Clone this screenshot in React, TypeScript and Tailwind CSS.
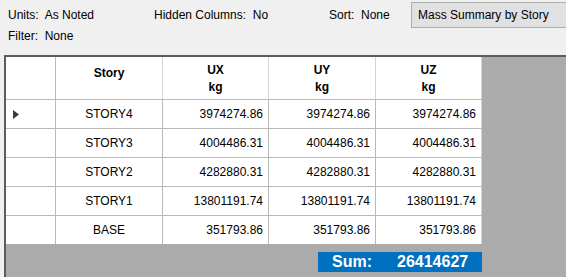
import React from 'react';

interface Row {
  story: string;
  ux: string;
  uy: string;
  uz: string;
}

const rows: Row[] = [
  { story: 'STORY4', ux: '3974274.86', uy: '3974274.86', uz: '3974274.86' },
  { story: 'STORY3', ux: '4004486.31', uy: '4004486.31', uz: '4004486.31' },
  { story: 'STORY2', ux: '4282880.31', uy: '4282880.31', uz: '4282880.31' },
  { story: 'STORY1', ux: '13801191.74', uy: '13801191.74', uz: '13801191.74' },
  { story: 'BASE', ux: '351793.86', uy: '351793.86', uz: '351793.86' },
];

export default function App() {
  return (
    <div className="w-[566px] h-[277px] overflow-hidden bg-[#f0f0f0] flex flex-col text-[12px] text-black font-['Liberation_Sans',Arial,sans-serif]">
      {/* Info bar */}
      <div className="h-[55px] flex flex-col">
        <div className="flex items-center h-[28px] pt-[1px]">
          <span className="ml-[8px] w-[146px] whitespace-pre">Units:  As Noted</span>
          <span className="w-[175px] whitespace-pre">Hidden Columns:  No</span>
          <span className="w-[82px] whitespace-pre">Sort:  None</span>
          <div className="h-[26px] flex-1 flex items-center pl-[6px] bg-[#e1e1e1] border border-r-0 border-[#adadad] whitespace-nowrap">
            Mass Summary by Story
          </div>
        </div>
        <div className="ml-[8px] -mt-[1px] whitespace-pre">Filter:  None</div>
      </div>

      {/* Grid */}
      <div className="flex-1 ml-[4px] border-t-2 border-l-2 border-[#5c5c5c] bg-[#ababab] flex flex-col">
        <div className="flex flex-col w-[476px] bg-white">
          <div className="flex h-[43px] border-b border-[#b9b9b9] font-bold">
            <div className="w-[50px] border-r border-[#b9b9b9]" />
            <div className="w-[107px] border-r border-[#d4d4d4] text-center pt-[7px]">Story</div>
            <div className="w-[106px] border-r border-[#d4d4d4] text-center pt-[5px] leading-[17px]">UX<br />kg</div>
            <div className="w-[107px] border-r border-[#d4d4d4] text-center pt-[5px] leading-[17px]">UY<br />kg</div>
            <div className="w-[106px] border-r border-[#d4d4d4] text-center pt-[5px] leading-[17px]">UZ<br />kg</div>
          </div>
          {rows.map((r, i) => (
            <div key={r.story} className="flex h-[29px] border-b border-[#b9b9b9] last:border-b-0 last:h-[28px]">
              <div className="w-[50px] border-r border-[#b9b9b9] flex items-center pl-[7px]">
                {i === 0 && (
                  <svg width="6" height="9" viewBox="0 0 6 9">
                    <path d="M0 0 L6 4.5 L0 9 Z" fill="#3c3c3c" />
                  </svg>
                )}
              </div>
              <div className="w-[107px] border-r border-[#b9b9b9] flex items-center justify-center">{r.story}</div>
              <div className="w-[106px] border-r border-[#b9b9b9] flex items-center justify-end pr-[5px]">{r.ux}</div>
              <div className="w-[107px] border-r border-[#b9b9b9] flex items-center justify-end pr-[5px]">{r.uy}</div>
              <div className="w-[106px] border-r border-[#d4d4d4] flex items-center justify-end pr-[5px]">{r.uz}</div>
            </div>
          ))}
        </div>
        <div className="ml-[312px] mt-[8px] w-[164px] h-[20px] bg-[#0070c0] text-white font-bold text-[16px] leading-[20px] flex items-center">
          <span className="ml-[14px] w-[65px]">Sum:</span>
          <span>26414627</span>
        </div>
      </div>
    </div>
  );
}
